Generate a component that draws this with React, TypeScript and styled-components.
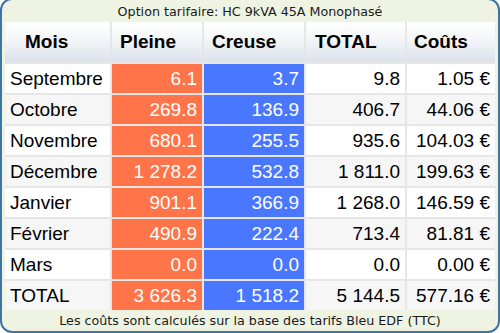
import React from "react";
import styled, { createGlobalStyle } from "styled-components";

const GlobalStyle = createGlobalStyle`
  html, body {
    margin: 0;
    padding: 0;
    background: #ffffff;
    overflow: hidden;
  }
`;

type Tone = "plain" | "hp" | "hc";

interface Row {
  month: string;
  pleine: string;
  creuse: string;
  total: string;
  cost: string;
}

const rows: Row[] = [
  { month: "Septembre", pleine: "6.1", creuse: "3.7", total: "9.8", cost: "1.05 €" },
  { month: "Octobre", pleine: "269.8", creuse: "136.9", total: "406.7", cost: "44.06 €" },
  { month: "Novembre", pleine: "680.1", creuse: "255.5", total: "935.6", cost: "104.03 €" },
  { month: "Décembre", pleine: "1 278.2", creuse: "532.8", total: "1 811.0", cost: "199.63 €" },
  { month: "Janvier", pleine: "901.1", creuse: "366.9", total: "1 268.0", cost: "146.59 €" },
  { month: "Février", pleine: "490.9", creuse: "222.4", total: "713.4", cost: "81.81 €" },
  { month: "Mars", pleine: "0.0", creuse: "0.0", total: "0.0", cost: "0.00 €" },
  { month: "TOTAL", pleine: "3 626.3", creuse: "1 518.2", total: "5 144.5", cost: "577.16 €" },
];

const App = () => {
  return (
    <>
      <GlobalStyle />
      <Panel>
        <Caption>Option tarifaire: HC 9kVA 45A Monophasé</Caption>
        <Table>
          <HeadCell $indent={20}>Mois</HeadCell>
          <HeadCell>Pleine</HeadCell>
          <HeadCell>Creuse</HeadCell>
          <HeadCell $indent={9}>TOTAL</HeadCell>
          <HeadCell $indent={7}>Coûts</HeadCell>
          {rows.map((r, i) => {
            const odd = i % 2 === 1;
            return (
              <React.Fragment key={r.month}>
                <Cell $odd={odd} $left>
                  {r.month}
                </Cell>
                <Cell $odd={odd} $tone="hp">
                  {r.pleine}
                </Cell>
                <Cell $odd={odd} $tone="hc">
                  {r.creuse}
                </Cell>
                <Cell $odd={odd}>{r.total}</Cell>
                <Cell $odd={odd}>{r.cost}</Cell>
              </React.Fragment>
            );
          })}
        </Table>
        <Footer>Les coûts sont calculés sur la base des tarifs Bleu EDF (TTC)</Footer>
      </Panel>
    </>
  );
};

export default App;

const Panel = styled.div`
  box-sizing: border-box;
  width: 500px;
  height: 335px;
  margin-top: -2px;
  border: 2px solid #3f74a3;
  border-radius: 12px;
  background: #eff3e2;
  display: flex;
  flex-direction: column;
  align-items: center;
  padding: 0 3px;
`;

const Caption = styled.div`
  height: 22px;
  line-height: 23px;
  font-family: "DejaVu Sans", Verdana, sans-serif;
  font-size: 12.7px;
  color: #1a1a1a;
  text-align: center;
  white-space: nowrap;
`;

const Table = styled.div`
  display: grid;
  grid-template-columns: 105px 90px 100px 99px 88px;
  grid-template-rows: 40px repeat(8, 29px);
  gap: 2px;
  background: #e6e6e6;
  font-family: "Liberation Sans", Arial, sans-serif;
  font-size: 19px;
`;

const HeadCell = styled.div<{ $indent?: number }>`
  display: flex;
  align-items: center;
  padding-left: ${(p) => p.$indent ?? 8}px;
  font-weight: 700;
  color: #000;
  background: linear-gradient(to bottom, #ffffff 0%, #f3f5f9 45%, #dbe1ec 100%);
`;

const toneBg: Record<Tone, string> = {
  plain: "",
  hp: "#ff7549",
  hc: "#4a77ff",
};

const Cell = styled.div<{ $odd?: boolean; $left?: boolean; $tone?: Tone }>`
  display: flex;
  align-items: center;
  justify-content: ${(p) => (p.$left ? "flex-start" : "flex-end")};
  padding: 0 ${(p) => (p.$left ? "0 0 5px" : "5px 0 0")};
  white-space: nowrap;
  color: ${(p) => (p.$tone && p.$tone !== "plain" ? "#ffffff" : "#000000")};
  background: ${(p) =>
    p.$tone && p.$tone !== "plain"
      ? toneBg[p.$tone]
      : p.$odd
      ? "#f6f6f6"
      : "#ffffff"};
`;

const Footer = styled.div`
  flex: 1;
  display: flex;
  align-items: center;
  font-family: "DejaVu Sans", Verdana, sans-serif;
  font-size: 12.7px;
  color: #1a1a1a;
  white-space: nowrap;
`;
